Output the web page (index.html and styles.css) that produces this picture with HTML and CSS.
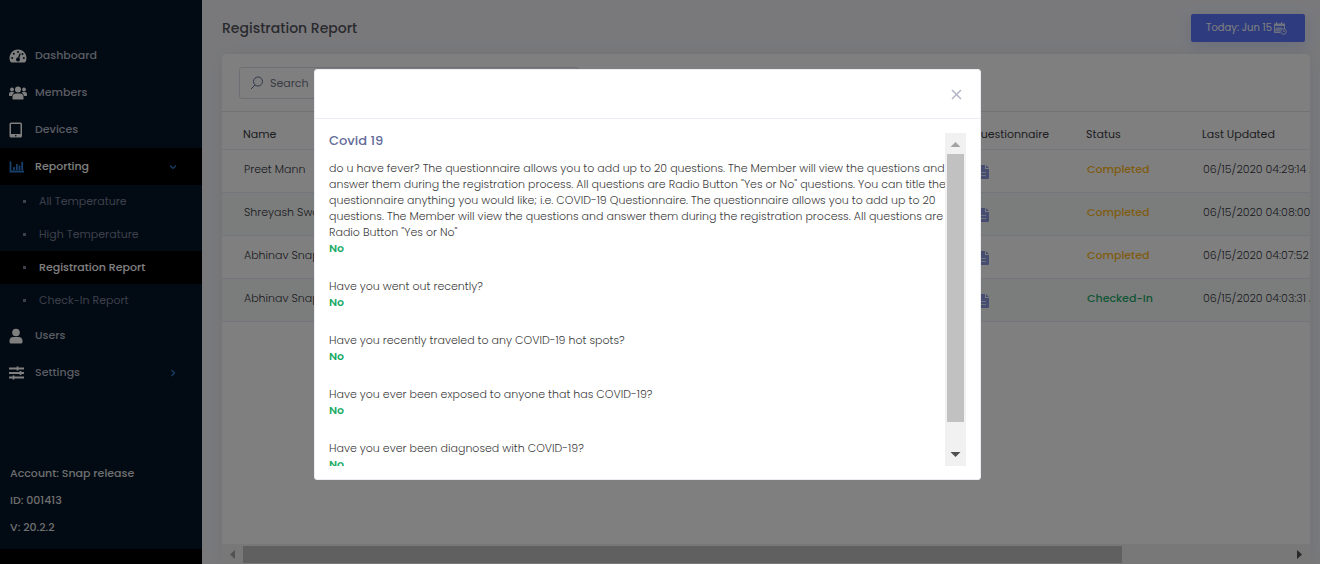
FILE: index.html
```html
<!DOCTYPE html>
<html lang="en">
<head>
<meta charset="utf-8">
<title>Registration Report</title>
<link rel="stylesheet" href="styles.css">
</head>
<body>
<svg class="defs" aria-hidden="true">
  <symbol id="doc" viewBox="0 0 12 14"><path fill="#8d9be0" d="M1 0h7v4h4v9a1 1 0 0 1-1 1H1a1 1 0 0 1-1-1V1a1 1 0 0 1 1-1zM9 0l3 3H9z"/><path stroke="#e0e4f7" d="M3 7.500h6M3 10.500h6"/></symbol>
</svg>
<div class="app">
  <aside class="sidebar">
    <nav class="menu">
      <a class="item" href="#"><svg class="icon" viewBox="0 0 18 16"><path fill="#fff" d="M9 1.500a8.500 8.500 0 0 0-7.600 12.200q.4.800 1.200.8h12.800q.8 0 1.200-.8A8.500 8.500 0 0 0 9 1.500z"/><g fill="#041628"><circle cx="9" cy="4" r="1"/><circle cx="4.800" cy="5.800" r="1"/><circle cx="3.200" cy="10" r="1"/><circle cx="14.800" cy="10" r="1"/><circle cx="13.500" cy="6" r="1"/><circle cx="9" cy="11.500" r="2"/></g><path stroke="#041628" stroke-width="1.300" d="M9 11.500l2.200-6"/></svg>Dashboard</a>
      <a class="item" href="#"><svg class="icon" viewBox="0 0 18 16"><g fill="#fff"><circle cx="9" cy="4.500" r="3"/><circle cx="3" cy="4.500" r="1.900"/><circle cx="15" cy="4.500" r="1.900"/><path d="M3.500 14v-2a3.500 3.500 0 0 1 3.500-3.500h4a3.500 3.500 0 0 1 3.500 3.500v2q0 .5-.8.500H4.300q-.8 0-.8-.5zM0 10.500V9a2 2 0 0 1 2-2h2q.8 0 1.400.6A4.600 4.600 0 0 0 3 11H.5zM18 10.500V9a2 2 0 0 0-2-2h-2q-.8 0-1.400.6A4.600 4.600 0 0 1 15 11h2.500z"/></g></svg>Members</a>
      <a class="item" href="#"><svg class="icon" viewBox="0 0 18 16"><path fill="#fff" fill-rule="evenodd" d="M2 .5h9.500A1.500 1.500 0 0 1 13 2v12a1.500 1.500 0 0 1-1.500 1.500H2A1.500 1.500 0 0 1 .5 14V2A1.500 1.500 0 0 1 2 .5zM2 2v10h9.500V2zM6.750 13a.8.8 0 1 0 0 1.600.8.8 0 0 0 0-1.600z"/></svg>Devices</a>
      <a class="item active" href="#"><svg class="icon" viewBox="0 0 18 16"><path fill="none" stroke="#2f80d8" stroke-width="1.800" d="M1.500 2.500v10H15M5 11V8M7.800 11V5M10.500 11V6.500M13.200 11V3"/></svg>Reporting<svg class="caret" viewBox="0 0 8 8"><path fill="none" stroke="#2f80d8" stroke-width="1.200" d="M1 2.500l3 3 3-3"/></svg></a>
      <div class="submenu">
        <a class="sub" href="#">All Temperature</a>
        <a class="sub" href="#">High Temperature</a>
        <a class="sub current" href="#">Registration Report</a>
        <a class="sub" href="#">Check-In Report</a>
      </div>
      <a class="item" href="#"><svg class="icon" viewBox="0 0 18 16"><g fill="#fff"><circle cx="7" cy="4.500" r="3.800"/><path d="M.5 14v-1.500A3.800 3.800 0 0 1 4.300 9h5.400a3.800 3.800 0 0 1 3.800 3.500V14q0 1.500-1.500 1.500H2Q.5 15.500.5 14z"/></g></svg>Users</a>
      <a class="item" href="#"><svg class="icon" viewBox="0 0 18 16"><path stroke="#fff" stroke-width="1.800" d="M0 3.500h15M0 8h15M0 12.500h15M8.500 1.500v4M11.500 6v4M4.500 10.500v4"/></svg>Settings<svg class="caret" viewBox="0 0 8 8"><path fill="none" stroke="#2f80d8" stroke-width="1.200" d="M2.500 1l3 3-3 3"/></svg></a>
    </nav>
    <div class="account">
      <div>Account: Snap release</div>
      <div>ID: 001413</div>
      <div>V: 20.2.2</div>
    </div>
  </aside>
  <main class="main">
    <header class="topbar">
      <h1 class="title">Registration Report</h1>
      <button class="today" type="button">Today: Jun 15
        <svg class="calendar" viewBox="0 0 13 13"><path fill="#dfe4ff" d="M0 1.500h2V0h1v1.500h4V0h1v1.500h3V4H0z"/><path fill="none" stroke="#dfe4ff" d="M.5 3v7.500H6M10.500 3v4M3 5v4M5 5v4M7 5v2M1 7h7M1 9h5"/><circle cx="9.500" cy="9.500" r="2.800" fill="#5d78ff" stroke="#dfe4ff"/><path fill="none" stroke="#dfe4ff" stroke-width=".8" d="M9.500 8v1.500H11"/></svg>
      </button>
    </header>
    <section class="card">
      <div class="filters">
        <label class="search">
          <svg class="lens" viewBox="0 0 14 14"><circle cx="8" cy="5.500" r="4.500" fill="none" stroke="#646c9a"/><path stroke="#646c9a" d="M5 9l-4 4"/></svg>
          <input class="search-input" type="text" placeholder="Search" aria-label="Search">
        </label>
      </div>
      <div class="table-view">
        <table class="table">
          <colgroup><col class="col-name"><col class="col-question"><col class="col-status"><col></colgroup>
          <thead><tr><th>Name</th><th>Questionnaire</th><th>Status</th><th>Last Updated</th></tr></thead>
          <tbody>
            <tr><td>Preet Mann</td><td><svg class="doc"><use href="#doc"/></svg></td><td class="completed">Completed</td><td>06/15/2020 04:29:14 AM</td></tr>
            <tr><td>Shreyash Swa</td><td><svg class="doc"><use href="#doc"/></svg></td><td class="completed">Completed</td><td>06/15/2020 04:08:00 AM</td></tr>
            <tr><td>Abhinav Snap</td><td><svg class="doc"><use href="#doc"/></svg></td><td class="completed">Completed</td><td>06/15/2020 04:07:52 AM</td></tr>
            <tr><td>Abhinav Snap</td><td><svg class="doc"><use href="#doc"/></svg></td><td class="checked">Checked-In</td><td>06/15/2020 04:03:31 AM</td></tr>
          </tbody>
        </table>
      </div>
      <div class="hbar">
        <svg class="arrow" viewBox="0 0 21 20"><path fill="#a3a3a3" d="M13 5.500v9l-5-4.500z"/></svg>
        <div class="htrack"><div class="hthumb"></div></div>
        <svg class="arrow" viewBox="0 0 21 20"><path fill="#505050" d="M8 5.500v9l5-4.500z"/></svg>
      </div>
    </section>
  </main>
</div>
<div class="backdrop">
  <div class="modal" role="dialog" aria-modal="true" aria-labelledby="form-name">
    <div class="modal-head">
      <button class="close" type="button" aria-label="Close"><svg class="cross" viewBox="0 0 11 11"><path stroke="#b4b4c8" stroke-width="1.500" d="M1 1l9 9M10 1l-9 9"/></svg></button>
    </div>
    <div class="modal-body">
      <div class="answers">
        <h2 class="form-name" id="form-name">Covid 19</h2>
        <div class="entry"><p class="long">do u have fever? The questionnaire allows you to add up to 20 questions. The Member will view the questions and<br>answer them during the registration process. All questions are Radio Button "Yes or No" questions. You can title the<br>questionnaire anything you would like; i.e. COVID-19 Questionnaire. The questionnaire allows you to add up to 20<br>questions. The Member will view the questions and answer them during the registration process. All questions are<br>Radio Button "Yes or No"</p><strong>No</strong></div>
        <div class="entry"><p>Have you went out recently?</p><strong>No</strong></div>
        <div class="entry"><p>Have you recently traveled to any COVID-19 hot spots?</p><strong>No</strong></div>
        <div class="entry"><p>Have you ever been exposed to anyone that has COVID-19?</p><strong>No</strong></div>
        <div class="entry"><p>Have you ever been diagnosed with COVID-19?</p><strong>No</strong></div>
      </div>
      <div class="vbar">
        <svg class="arrow" viewBox="0 0 21 21"><path fill="#a3a3a3" d="M5.500 14h10l-5-5z"/></svg>
        <div class="vtrack"><div class="vthumb"></div></div>
        <svg class="arrow" viewBox="0 0 21 21"><path fill="#505050" d="M5.500 7h10l-5 5z"/></svg>
      </div>
    </div>
  </div>
</div>
</body>
</html>
```
FILE: styles.css
```css
* { box-sizing: border-box; }
body { margin: 0; font-family: Poppins, Inter, "Open Sans", sans-serif; font-size: 11px; color: #48484c; overflow: hidden; }
h1, h2, p { margin: 0; }
svg { display: block; flex: none; }
a { color: inherit; text-decoration: none; }
button, input { font: inherit; }
.defs { position: absolute; width: 0; height: 0; }

.app { display: flex; height: 100vh; background: #f2f3f8; }

.sidebar { display: flex; flex-direction: column; justify-content: space-between; width: 202px; flex: none; padding-top: 37px; background: #041628; border-bottom: 15px solid #000; }
.item { display: flex; align-items: center; height: 37px; padding: 0 25px 0 9px; color: #b4b8c6; font-weight: 500; }
.icon { width: 18px; height: 16px; margin-right: 8px; }
.caret { width: 8px; height: 8px; margin-left: auto; }
.active { background: #000; color: #fff; }
.sub { display: flex; align-items: center; height: 33px; padding-left: 23px; color: #7a7e94; }
.sub::before { content: ""; width: 3px; height: 3px; margin-right: 13px; background: #7a7e94; }
.current { background: #000; color: #fff; font-weight: 500; }
.account { padding: 0 10px 8px; line-height: 27px; color: #ddd; font-weight: 500; }

.main { flex: 1; min-width: 0; display: flex; flex-direction: column; padding: 0 10px 0 20px; }
.topbar { display: flex; align-items: center; justify-content: space-between; height: 54px; flex: none; padding: 2px 5px 0 0; }
.title { font-size: 14px; font-weight: 500; color: #53535c; }
.today { display: flex; align-items: center; gap: 2px; width: 114px; height: 28px; padding: 0 15px; border: 0; border-radius: 2px; background: #5d78ff; color: #fff; font-size: 10px; white-space: nowrap; box-shadow: 0 4px 14px rgba(93, 120, 255, .2); }
.calendar { width: 13px; height: 13px; }
.card { flex: 1; min-height: 0; display: flex; flex-direction: column; border-radius: 4px; background: #fff; box-shadow: 0 0 13px rgba(82, 63, 105, .08); }
.filters { padding: 13px 17px 12px; border-bottom: 1px solid #e2e5ec; }
.search { display: flex; align-items: center; gap: 6px; width: 340px; height: 32px; padding: 0 10px; border: 1px solid #dcdfea; border-radius: 3px; }
.lens { width: 14px; height: 14px; }
.search-input { flex: 1; min-width: 0; padding: 0; border: 0; outline: 0; background: none; color: #74788d; }
.search-input::placeholder { color: #74788d; }

.table-view { flex: 1; min-height: 0; overflow: hidden; }
.table { width: 1300px; table-layout: fixed; border-collapse: collapse; }
.col-name { width: 729px; }
.col-question { width: 114px; }
.col-status { width: 116px; }
th, td { text-align: left; white-space: nowrap; border-bottom: 1px solid #ebedf8; }
th { height: 37px; padding: 9px 0 0 21px; font-weight: 400; color: #3c3c46; }
td { height: 43px; padding: 0 0 2px 22px; font-weight: 300; color: #36363e; }
tbody tr:nth-child(even) { background: #f7fbfa; }
td.completed { color: #ffb822; font-weight: 500; }
td.checked { color: #1dab68; font-weight: 500; }
.doc { width: 12px; height: 14px; margin: 4px 0 0 4px; }

.arrow { width: 21px; height: 21px; }
.hbar { display: flex; align-items: center; height: 20px; flex: none; background: #f1f1f1; }
.htrack { flex: 1; }
.hthumb { width: 84%; height: 17px; background: #c1c1c1; }

.backdrop { position: fixed; inset: 0; padding: 69px 25px 84px 0; background: rgba(0, 0, 0, .5); }
.modal { display: flex; flex-direction: column; width: 100%; max-width: 667px; height: 100%; margin: 0 auto; border: 1px solid #ebedf2; border-radius: 3px; background: #fff; }
.modal-head { display: flex; align-items: center; justify-content: flex-end; height: 49px; flex: none; padding-right: 18px; border-bottom: 1px solid #ebedf2; }
.close { padding: 0; border: 0; background: none; }
.cross { width: 11px; height: 11px; }
.modal-body { flex: 1; min-height: 0; display: flex; padding: 14px 14px 13px; }
.answers { flex: 1; min-width: 0; overflow: hidden; line-height: 16px; font-weight: 300; color: #3c3c3c; }
.form-name { margin-bottom: 11px; font-size: 13px; font-weight: 500; color: #646c9a; }
.entry { margin-bottom: 22px; }
.long { white-space: nowrap; }
.entry strong { display: block; font-weight: 600; color: #1dab68; }
.vbar { display: flex; flex-direction: column; width: 21px; flex: none; background: #f1f1f1; }
.vtrack { flex: 1; padding: 0 2px; }
.vthumb { height: 92%; background: #c1c1c1; }
```
